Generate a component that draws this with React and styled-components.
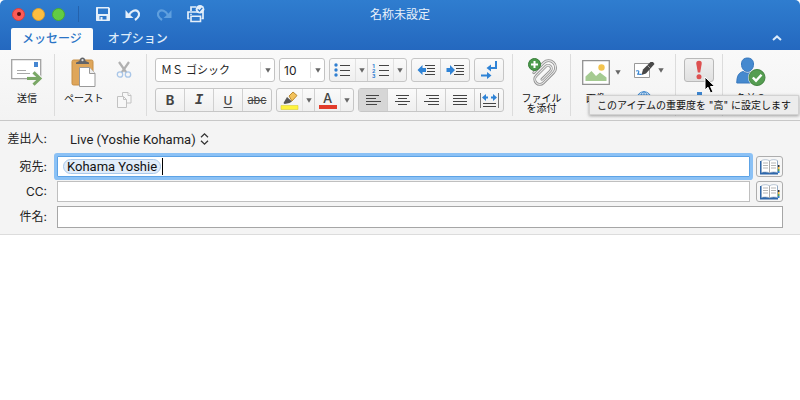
import React from 'react'
import styled, { createGlobalStyle, css } from 'styled-components'


const App = () => (
    <Window>
        <GlobalStyle />
        <Header>
            <TitleBar>
                <TitleTools>
                    <Lights>
                        <Light $color="#fc5b57" $edge="#d8413e" aria-label="閉じる"><i /></Light>
                        <Light $color="#fdbe41" $edge="#dca032" aria-label="しまう" />
                        <Light $color="#62cc43" $edge="#4aa933" aria-label="拡大" />
                    </Lights>
                    <QuickTools>
                        <QuickButton aria-label="保存"><SaveIcon /></QuickButton>
                        <QuickButton aria-label="元に戻す"><UndoIcon color="#e4effa" /></QuickButton>
                        <QuickButton aria-label="やり直す" disabled><UndoIcon color="#5f9fde" flip /></QuickButton>
                        <QuickButton aria-label="印刷"><PrintIcon /></QuickButton>
                    </QuickTools>
                </TitleTools>
                <Title>名称未設定</Title>
            </TitleBar>
            <Tabs>
                <Tab $active>メッセージ</Tab>
                <Tab>オプション</Tab>
                <Collapse aria-label="リボンを折りたたむ">
                    <svg width="10" height="6" viewBox="0 0 10 6"><path d="M1 5l4-3.6L9 5" fill="none" stroke="#dcebfa" strokeWidth="2" /></svg>
                </Collapse>
            </Tabs>
        </Header>

        <Ribbon>
            <Group $width="55px">
                <BigButton><IconBox><SendIcon /></IconBox>送信</BigButton>
            </Group>
            <Group $width="92px" $gap="12px" $start="9px">
                <BigButton><IconBox><PasteIcon /></IconBox>ペースト</BigButton>
                <SmallColumn>
                    <PlainButton aria-label="切り取り" disabled><CutIcon /></PlainButton>
                    <PlainButton aria-label="コピー" disabled><CopyIcon /></PlainButton>
                </SmallColumn>
            </Group>
            <Group>
                <FormatRows>
                    <FormatRow>
                        <Combo $width="120px">
                            <select aria-label="フォント"><option>ＭＳ ゴシック</option></select>
                            <ComboCaret><Caret /></ComboCaret>
                        </Combo>
                        <Combo $width="46px" $latin>
                            <select aria-label="サイズ"><option>10</option></select>
                            <ComboCaret><Caret /></ComboCaret>
                        </Combo>
                        <ButtonSet>
                            <Tool $split aria-label="箇条書き"><BulletIcon /></Tool>
                            <Drop aria-label="箇条書きの種類"><Caret /></Drop>
                            <Tool $split aria-label="段落番号"><NumberIcon /></Tool>
                            <Drop aria-label="段落番号の種類"><Caret /></Drop>
                        </ButtonSet>
                        <ButtonSet>
                            <Tool aria-label="インデントを減らす"><IndentIcon left /></Tool>
                            <Tool aria-label="インデントを増やす"><IndentIcon /></Tool>
                        </ButtonSet>
                        <ButtonSet>
                            <Tool aria-label="文字の方向"><DirectionIcon /></Tool>
                        </ButtonSet>
                    </FormatRow>
                    <FormatRow>
                        <ButtonSet>
                            <Tool aria-label="太字"><b>B</b></Tool>
                            <Tool aria-label="斜体"><em>I</em></Tool>
                            <Tool aria-label="下線"><u>U</u></Tool>
                            <Tool aria-label="取り消し線"><s>abc</s></Tool>
                        </ButtonSet>
                        <ButtonSet>
                            <Tool $split aria-label="蛍光ペンの色"><MarkerIcon /></Tool>
                            <Drop aria-label="蛍光ペンの色を選択"><Caret /></Drop>
                            <Tool $split aria-label="フォントの色"><LetterColor>A</LetterColor></Tool>
                            <Drop aria-label="フォントの色を選択"><Caret /></Drop>
                        </ButtonSet>
                        <ButtonSet>
                            <Tool $pressed aria-label="左揃え"><LinesIcon d="M1 1.5h13M1 4.5h10M1 7.5h15M1 10.5h11" /></Tool>
                            <Tool aria-label="中央揃え"><LinesIcon d="M2 1.5h13M4 4.5h9M1 7.5h15M4 10.5h9" /></Tool>
                            <Tool aria-label="右揃え"><LinesIcon d="M3 1.5h13M6 4.5h10M1 7.5h15M5 10.5h11" /></Tool>
                            <Tool aria-label="両端揃え"><LinesIcon d="M1 1.5h14M1 4.5h14M1 7.5h14M1 10.5h14" /></Tool>
                            <Tool aria-label="均等割り付け"><DistributeIcon /></Tool>
                        </ButtonSet>
                    </FormatRow>
                </FormatRows>
            </Group>
            <Group $width="58px">
                <BigButton><IconBox><AttachIcon /></IconBox>ファイル<br />を添付</BigButton>
            </Group>
            <Group $width="105px" $gap="13px">
                <PictureButton>
                    <BigButton><IconBox><PictureIcon /></IconBox>画像</BigButton>
                    <Caret />
                </PictureButton>
                <SmallColumn>
                    <PlainButton aria-label="署名"><SignIcon /><Caret /></PlainButton>
                    <PlainButton aria-label="ハイパーリンク"><GlobeIcon /></PlainButton>
                </SmallColumn>
            </Group>
            <Group>
                <FormatRows>
                    <TipAnchor>
                        <ButtonSet $hover>
                            <Tool aria-label="重要度 - 高" aria-describedby="tip"><HighIcon /></Tool>
                        </ButtonSet>
                        <Pointer><CursorIcon /></Pointer>
                        <Tooltip id="tip" role="tooltip">このアイテムの重要度を &quot;高&quot; に設定します</Tooltip>
                    </TipAnchor>
                    <LowButton aria-label="重要度 - 低"><LowIcon /></LowButton>
                </FormatRows>
            </Group>
            <Group $width="56px" $last>
                <BigButton><IconBox><CheckNameIcon /></IconBox>名前の</BigButton>
            </Group>
        </Ribbon>

        <Fields>
            <FieldLabel htmlFor="from">差出人:</FieldLabel>
            <From>
                <select id="from"><option>Live (Yoshie Kohama)</option></select>
                <svg width="9" height="14" viewBox="0 0 9 14"><path d="M1 5.2L4.5 1.8 8 5.2M1 8.8l3.5 3.4L8 8.8" fill="none" stroke="#333" strokeWidth="1.3" /></svg>
            </From>

            <FieldLabel htmlFor="to">宛先:</FieldLabel>
            <Recipients $focus>
                <Chip>Kohama Yoshie</Chip>
                <TextCaret />
                <input id="to" type="text" />
            </Recipients>
            <BookButton aria-label="宛先のアドレス帳"><BookIcon /></BookButton>

            <FieldLabel htmlFor="cc">CC:</FieldLabel>
            <Recipients>
                <input id="cc" type="text" />
            </Recipients>
            <BookButton aria-label="CCのアドレス帳"><BookIcon /></BookButton>

            <FieldLabel htmlFor="subject">件名:</FieldLabel>
            <Subject id="subject" type="text" />
        </Fields>
        <Body aria-label="本文" />
    </Window>
)

export default App


/* icons */

const Caret = () => (
    <svg width="6" height="5" viewBox="0 0 6 5"><path d="M0.3 0.3h5.4L3 4.8z" fill="#666" /></svg>
)

const SaveIcon = () => (
    <svg width="14" height="14" viewBox="0 0 14 14">
        <path fillRule="evenodd" fill="#e4effa" d="M0.5 0h12.3L14 1.2V13.5l-.5.5H.5L0 13.5V.5zM2 1.5V7h10V1.5zM3.500 9v3.600h7V9z" />
        <path fill="#e4effa" d="M4.5 10h2v3h-2z" />
    </svg>
)

const UndoIcon = ({ color, flip }) => (
    <svg width="16" height="13" viewBox="0 0 16 13">
        <g transform={flip ? 'matrix(-1 0 0 1 16 0)' : undefined}>
            <path d="M4 7C6.500 2.500 10.500 1.200 13 3.500c2.300 2.500 1 5.500-3 8.500" fill="none" stroke={color} strokeWidth="2.200" />
            <path d="M.5 2v8h8L6 7.800 3 5z" fill={color} />
        </g>
    </svg>
)

const PrintIcon = () => (
    <svg width="18" height="18" viewBox="0 0 18 18">
        <path d="M4 6V2h5M2.500 13.500H1V7h15v6.500h-1.500" fill="none" stroke="#e4effa" strokeWidth="1.700" />
        <path d="M4 11.300h9.500v5.200H4z" fill="#2f79cb" stroke="#e4effa" strokeWidth="1.600" />
        <path d="M3 9.300h2" stroke="#e4effa" />
        <circle cx="13" cy="4.300" r="4.300" fill="#e4effa" />
        <path d="M10.800 4.300l1.700 1.700 2.800-3.200" fill="none" stroke="#2c76c8" strokeWidth="1.200" />
    </svg>
)

const SendIcon = () => (
    <svg width="32" height="28" viewBox="0 0 32 28">
        <path d="M.7 1.700h29v19H.7z" fill="#fff" stroke="#a3a3a3" strokeWidth="1.300" />
        <path d="M23 4h4v5h-4z" fill="#4687d2" />
        <path d="M6 12.500h9M6 15.500h13" stroke="#a8a8a8" />
        <path d="M16 20.500h12M22.500 14l6.500 6.500-6.500 6.500" fill="none" stroke="#f5f5f5" strokeWidth="5" />
        <path d="M16 20.500h13M22.500 14.300l6.500 6.200-6.500 6.200" fill="none" stroke="#79a765" strokeWidth="3" />
    </svg>
)

const PasteIcon = () => (
    <svg width="26" height="30" viewBox="0 0 26 30">
        <rect x="1" y="3" width="21" height="25" rx="1.500" fill="#dfa65a" stroke="#c68e45" />
        <path d="M5 7V5.500L8.500 4C8.500 1.800 9.800.5 11.500.5S14.500 1.800 14.500 4L18 5.500V7z" fill="#626468" />
        <circle cx="11.500" cy="3.200" r="1.100" fill="#ddd" />
        <path d="M8.500 10.500h10l5.500 6v13H8.500z" fill="#fff" stroke="#999" />
        <path d="M18.500 10.500v6H24" fill="#eee" stroke="#999" />
    </svg>
)

const CutIcon = () => (
    <svg width="16" height="18" viewBox="0 0 16 18">
        <path d="M3 1l7.300 10.500M13 1L5.700 11.500" stroke="#b0b0b0" strokeWidth="2.200" />
        <circle cx="4" cy="13.500" r="2.700" fill="none" stroke="#a9c6e8" strokeWidth="1.300" />
        <circle cx="12" cy="13.500" r="2.700" fill="none" stroke="#a9c6e8" strokeWidth="1.300" />
    </svg>
)

const CopyIcon = () => (
    <svg width="16" height="18" viewBox="0 0 16 18">
        <path d="M6.500 5V1.500h5.500l3 3V12h-4" fill="#f7f7f7" stroke="#c2c2c2" />
        <path d="M12 1.500v3h3M1.500 5.500h6l3 3v8h-9zM7.500 5.500v3h3" fill="#f7f7f7" stroke="#c2c2c2" />
    </svg>
)

const BulletIcon = () => (
    <svg width="17" height="14" viewBox="0 0 17 14">
        <path d="M6 2.500h10M6 7.500h10M6 12.500h10" stroke="#444" strokeWidth="1.200" />
        <g fill="#2f7fd1"><circle cx="2" cy="2" r="1.700" /><circle cx="2" cy="7" r="1.700" /><circle cx="2" cy="12" r="1.700" /></g>
    </svg>
)

const NumberIcon = () => (
    <svg width="17" height="15" viewBox="0 0 17 15">
        <path d="M7 2.500h10M7 7.500h10M7 12.500h10" stroke="#444" strokeWidth="1.200" />
        <g fill="#2f7fd1" fontSize="6" fontFamily="Roboto, sans-serif" fontWeight="700">
            <text x="0" y="4.500">1</text><text x="0" y="9.500">2</text><text x="0" y="14.500">3</text>
        </g>
    </svg>
)

const IndentIcon = ({ left }) => (
    <svg width="19" height="12" viewBox="0 0 19 12">
        <path d="M8 1.500h10M10 4.500h8M10 7.500h8M8 10.500h10" stroke="#444" strokeWidth="1.100" />
        <path d={left ? 'M.5 6L5.500 1v3H9v4H5.500v3z' : 'M9 6L4 1v3H.5v4H4v3z'} fill="#2f83d6" />
    </svg>
)

const DirectionIcon = () => (
    <svg width="17" height="18" viewBox="0 0 17 18">
        <path d="M15 0v7H9M0 14.500h7" fill="none" stroke="#2f83d6" strokeWidth="2" />
        <path d="M5.500 7L10 3.500v7zM10.500 14.500L6 11v7z" fill="#2f83d6" />
    </svg>
)

const MarkerIcon = () => (
    <svg width="19" height="19" viewBox="0 0 19 19">
        <path d="M1 14.500h17v4H1z" fill="#fff33c" stroke="#d8cf3a" strokeWidth=".6" />
        <path d="M9 5l4-4 4 3.500-5 5.500z" fill="#f3c25b" stroke="#bb8b31" />
        <path d="M7 6l5 4.500-2.500 1.500-5 1L3.500 12z" fill="#555" />
    </svg>
)

const LinesIcon = ({ d }) => (
    <svg width="17" height="12" viewBox="0 0 17 12"><path d={d} stroke="#444" strokeWidth="1.200" /></svg>
)

const DistributeIcon = () => (
    <svg width="19" height="15" viewBox="0 0 19 15">
        <path d="M.5 0v15M18.500 0v15" stroke="#777" />
        <path d="M3 10.500h13M3 13.500h13" stroke="#444" strokeWidth="1.200" />
        <path d="M2 4.500L6 1v2.500h2v2H6V8zM17 4.500L13 1v2.500h-2v2h2V8z" fill="#2f83d6" />
    </svg>
)

const AttachIcon = () => (
    <svg width="30" height="30" viewBox="0 0 30 30">
        <g transform="rotate(45 17 16)" fill="none" strokeLinecap="round">
            <path d="M9.500 23V9a7 7 0 0 1 14 0v14.500a5 5 0 0 1-10 0V10a3 3 0 0 1 6.500 0v12" stroke="#8d8d8d" strokeWidth="2.800" />
            <path d="M9.500 23V9a7 7 0 0 1 14 0v14.500a5 5 0 0 1-10 0V10a3 3 0 0 1 6.500 0v12" stroke="#e6e6e6" strokeWidth="1.200" />
        </g>
        <circle cx="7.500" cy="7.500" r="6" fill="#4b9a4b" stroke="#357d37" />
        <path d="M7.500 4v7M4 7.500h7" stroke="#fff" strokeWidth="2" />
    </svg>
)

const PictureIcon = () => (
    <svg width="28" height="25" viewBox="0 0 28 25">
        <path d="M.7.700h26.600v23.600H.7z" fill="#fff" stroke="#929292" strokeWidth="1.300" />
        <path d="M3.500 21v-4.500l6-5.500 4.500 5 4-3.500 6.500 5V21z" fill="#a5cb92" />
        <circle cx="19.500" cy="7.500" r="3.200" fill="#f3c44f" />
    </svg>
)

const SignIcon = () => (
    <svg width="21" height="18" viewBox="0 0 21 18">
        <path d="M.5 2.500h15v14H.5z" fill="#fff" stroke="#999" />
        <path d="M7.500 14l1.500-5.500L16.500 1h2.500l1.500 2-8.500 9.500z" fill="#484848" />
        <path d="M13.500 4.500l3 3" stroke="#bbb" strokeWidth=".8" />
        <path d="M2 10c4-1 3 1 1.500 3.500 2-1.500 2 1 4-.5" fill="none" stroke="#3885d2" strokeWidth="1.200" />
    </svg>
)

const GlobeIcon = () => (
    <svg width="18" height="16" viewBox="0 0 18 16">
        <g fill="#eef6fd" stroke="#3c86cd"><circle cx="10" cy="8" r="7.300" /><ellipse cx="10" cy="8" rx="3.500" ry="7.300" /><path d="M3 8h14M4 4h12M4 12h12M10 1v14" /></g>
    </svg>
)

const HighIcon = () => (
    <svg width="8" height="20" viewBox="0 0 8 20">
        <path d="M4 .8C6 .8 7 2 6.700 3.800L5.200 12.500H2.800L1.300 3.800C1 2 2 .8 4 .8z" fill="#dd5050" />
        <circle cx="4" cy="16.800" r="2.500" fill="#dd5050" />
    </svg>
)

const LowIcon = () => (
    <svg width="12" height="16" viewBox="0 0 12 16"><path d="M4 0h5v8h3l-5.500 7L1 8h3z" fill="#3d86d1" /></svg>
)

const CheckNameIcon = () => (
    <svg width="30" height="30" viewBox="0 0 30 30">
        <path d="M5.500 7C5.500 3 8 1 11.500 1s6 2 6 6c0 4.500-2.500 7.500-6 7.500S5.500 11.500 5.500 7z" fill="#4589cf" stroke="#3878bd" />
        <path d="M.8 26C.8 18.500 3 15.300 7.500 14.500c2.500 2 5.500 2 8 0 4 1 6 4 6.500 11.500z" fill="#4589cf" stroke="#3878bd" />
        <circle cx="21" cy="20.500" r="9" fill="#f5f5f5" />
        <circle cx="21" cy="20.500" r="8" fill="#559d51" stroke="#438440" />
        <path d="M16.800 20.500l3.200 3.200 5.500-6" fill="none" stroke="#fff" strokeWidth="2.400" />
    </svg>
)

const CursorIcon = () => (
    <svg width="12" height="18" viewBox="0 0 12 18">
        <path d="M1 1v13l3-2.800L6.500 17l2.500-1-2.500-5.500h4.300z" fill="#000" stroke="#fff" />
    </svg>
)

const BookIcon = () => (
    <svg width="20" height="16" viewBox="0 0 20 16">
        <path d="M0 2h18v13.500H0z" fill="#2c66ab" />
        <path d="M17.500 6h2v2h-2z" fill="#333" /><path d="M17.500 8h2v2h-2z" fill="#f0b43c" /><path d="M17.500 10h2v2h-2z" fill="#58a44e" /><path d="M17.500 12h2v2h-2z" fill="#2f7fd1" />
        <path d="M1.500 1.500C4.500.3 7.500.5 9.500 1.800v12c-2.500-1-5.500-1-8-.3zM9.500 1.800C12 .3 15 .3 17.500 1.500v12c-2.500-.7-5.500-.7-8 .3z" fill="#fff" stroke="#8da2ba" strokeWidth=".6" />
        <path d="M3 4h5M3 6.500h5M3 9h5M11 4h5M11 6.500h5M11 9h5" stroke="#b5b5b5" />
        <path d="M9.500 2v12" stroke="#aaa" />
    </svg>
)


/* layout */

const GlobalStyle = createGlobalStyle
`
    body{
        margin: 0;
        background: #fff;
    }
    *{
        box-sizing: border-box;
    }
    button, input, select, textarea{
        font: inherit;
        color: inherit;
        margin: 0;
        padding: 0;
        border: 0;
        background: none;
        outline: none;
    }
    select{
        appearance: none;
    }
    svg{
        display: block;
        flex: none;
    }
`

const Window = styled.div
`
    min-height: 100vh;
    display: flex;
    flex-direction: column;
    overflow: hidden;
    background: #fff;
    color: #222;
    font-family: Inter, "Noto Sans CJK JP", sans-serif;
    font-size: 12px;
`

const Header = styled.header
`
    background: linear-gradient(#2f7dcf, #2468bf);
    border-radius: 5px 5px 0 0;
    color: #fff;
`

const TitleBar = styled.div
`
    height: 28px;
    display: grid;
    grid-template-columns: 1fr auto 1fr;
    align-items: center;
`

const TitleTools = styled.div
`
    display: flex;
    align-items: center;
    padding-left: 12px;
`

const Lights = styled.div
`
    display: flex;
    gap: 7px;
    padding-right: 13px;
`

const Light = styled.button
`
    width: 13px;
    height: 13px;
    display: flex;
    align-items: center;
    justify-content: center;
    border: 1px solid ${props => props.$edge};
    border-radius: 50%;
    background: ${props => props.$color};
    i{
        width: 4px;
        height: 4px;
        border-radius: 50%;
        background: #600d0b;
    }
`

const QuickTools = styled.div
`
    display: flex;
    align-items: center;
    gap: 15px;
    height: 16px;
    padding-left: 17px;
    border-left: 1px solid #2462ac;
`

const QuickButton = styled.button
`
    display: flex;
`

const Title = styled.span
`
    line-height: 16px;
    padding-top: 1px;
    color: #e9f2fb;
`

const Tabs = styled.nav
`
    display: flex;
    padding-left: 11px;
`

const Tab = styled.button
`
    height: 22px;
    padding: 0 11px;
    margin-right: 4px;
    line-height: 20px;
    font-weight: 500;
    color: #dfecfa;
    ${props => props.$active && css`
        background: #fbfbfb;
        border-radius: 2px 2px 0 0;
        color: #2a74c6;
    `}
`

const Collapse = styled.button
`
    display: flex;
    align-items: center;
    margin-left: auto;
    padding: 0 18px 2px 0;
`

const Ribbon = styled.div
`
    display: flex;
    padding: 4px 0;
    background: linear-gradient(#f9f9f9, #f3f3f3);
    border-bottom: 1px solid #c8c8c8;
`

const Group = styled.section
`
    flex: none;
    height: 62px;
    width: ${props => props.$width || 'auto'};
    display: flex;
    justify-content: ${props => props.$start ? 'flex-start' : 'center'};
    gap: ${props => props.$gap || '0'};
    padding: ${props => props.$width ? '0' : '0 8px'};
    ${props => props.$start && css`
        padding-left: ${props.$start};
    `}
    border-right: ${props => props.$last ? '0' : '1px solid #dcdcdc'};
`

const BigButton = styled.button
`
    display: block;
    align-self: flex-start;
    padding-top: 2px;
    font-size: 10px;
    line-height: 10px;
    white-space: nowrap;
    color: #111;
`

const IconBox = styled.span
`
    height: 32px;
    margin-bottom: 5px;
    display: flex;
    align-items: center;
    justify-content: center;
`

const PictureButton = styled.div
`
    display: flex;
    align-items: flex-start;
    gap: 5px;
    > svg{
        margin-top: 16px;
    }
`

const SmallColumn = styled.div
`
    display: flex;
    flex-direction: column;
    gap: 12px;
    padding-top: 7px;
`

const PlainButton = styled.button
`
    display: flex;
    align-items: center;
    gap: 3px;
`

const FormatRows = styled.div
`
    display: flex;
    flex-direction: column;
    gap: 6px;
    padding-top: 4px;
`

const FormatRow = styled.div
`
    display: flex;
    gap: 4px;
`

const Combo = styled.div
`
    width: ${props => props.$width};
    height: 24px;
    display: grid;
    background: #fff;
    border: 1px solid #c3c3c3;
    border-radius: 3px;
    select{
        grid-area: 1 / 1;
        padding-left: ${props => props.$latin ? '4px' : '5px'};
        font-size: ${props => props.$latin ? '12px' : '11px'};
        color: #222;
    }
`

const ComboCaret = styled.span
`
    grid-area: 1 / 1;
    justify-self: end;
    width: 14px;
    margin: 3px 0;
    display: flex;
    align-items: center;
    justify-content: center;
    border-left: 1px solid #e2e2e2;
    pointer-events: none;
`

const ButtonSet = styled.div
`
    display: flex;
    height: 24px;
    border: 1px solid ${props => props.$hover ? '#b9b9b9' : '#c6c6c6'};
    border-radius: 3px;
    background: ${props => props.$hover ? 'linear-gradient(#f0f0f0, #e0e0e0)' : 'linear-gradient(#fafafa, #efefef)'};
`

const Tool = styled.button
`
    width: ${props => props.$split ? '26px' : '29px'};
    display: flex;
    align-items: center;
    justify-content: center;
    background: ${props => props.$pressed ? '#d6d6d6' : 'none'};
    border-right: 1px solid ${props => props.$split ? '#e2e2e2' : '#d0d0d0'};
    font-size: 12px;
    color: #444;
    &:last-child{
        width: 28px;
        border-right: 0;
    }
    b{
        font-size: 13px;
    }
    em{
        font-family: "Liberation Mono", monospace;
        font-size: 14px;
        font-weight: 700;
    }
    s{
        font-size: 11px;
    }
    u{
        text-underline-offset: 2px;
        font-weight: 500;
    }
`

const Drop = styled.button
`
    width: 12px;
    display: flex;
    align-items: center;
    justify-content: center;
    border-right: 1px solid #d0d0d0;
    &:last-child{
        border-right: 0;
    }
`

const LetterColor = styled.span
`
    width: 18px;
    border-bottom: 4px solid #e23b2a;
    font-size: 13px;
    line-height: 14px;
    font-weight: 500;
    text-align: center;
`

const LowButton = styled.button
`
    height: 24px;
    padding-top: 4px;
    display: flex;
    justify-content: center;
`

const TipAnchor = styled.div
`
    position: relative;
`

const Pointer = styled.span
`
    position: absolute;
    z-index: 3;
    left: 20px;
    top: 18px;
    pointer-events: none;
`

const Tooltip = styled.div
`
    position: absolute;
    z-index: 2;
    top: 37px;
    right: -85px;
    padding: 0 7px;
    background: #ececec;
    border: 1px solid #d2d2d2;
    box-shadow: 0 1px 3px rgba(0, 0, 0, 0.35);
    font-size: 10px;
    line-height: 18px;
    white-space: nowrap;
    color: #111;
`

const Fields = styled.form
`
    display: grid;
    grid-template-columns: 47px 1fr 27px;
    grid-template-rows: 26px 21px 21px 22px;
    row-gap: 4px;
    align-items: center;
    padding: 5px 17px 6px 0;
    background: #f4f4f4;
    border-bottom: 1px solid #dcdcdc;
`

const FieldLabel = styled.label
`
    grid-column: 1;
    line-height: 18px;
    text-align: right;
    white-space: nowrap;
`

const From = styled.div
`
    grid-column: 2 / 4;
    display: flex;
    align-items: center;
    gap: 4px;
    padding-left: 23px;
    font-family: Roboto, sans-serif;
    font-size: 13px;
`

const Recipients = styled.div
`
    align-self: stretch;
    display: flex;
    align-items: center;
    margin: 0 6px 0 10px;
    padding-left: 5px;
    background: #fff;
    border: 1px solid ${props => props.$focus ? '#5da3e6' : '#bfbfbf'};
    box-shadow: ${props => props.$focus ? '0 0 0 3px #8bc1f5' : 'none'};
    border-radius: ${props => props.$focus ? '1px' : '0'};
    input{
        flex: 1;
        min-width: 0;
    }
`

const Chip = styled.span
`
    padding: 0 3px;
    font-family: Roboto, sans-serif;
    font-size: 13px;
    line-height: 13px;
    color: #111;
    background: #e1ecf9;
    border: 1px solid #a9c9ec;
    border-radius: 8px;
`

const TextCaret = styled.span
`
    width: 1px;
    height: 17px;
    margin-left: 1px;
    background: #000;
`

const BookButton = styled.button
`
    align-self: stretch;
    display: flex;
    align-items: center;
    justify-content: center;
    background: #f6f6f6;
    border: 1px solid #adadad;
    border-radius: 3px;
`

const Subject = styled.input
`
    grid-column: 2 / 4;
    align-self: stretch;
    margin-left: 10px;
    padding: 0 5px;
    background: #fff;
    border: 1px solid #a6a6a6;
`

const Body = styled.textarea
`
    flex: 1;
    padding: 8px;
    resize: none;
    background: #fff;
`
